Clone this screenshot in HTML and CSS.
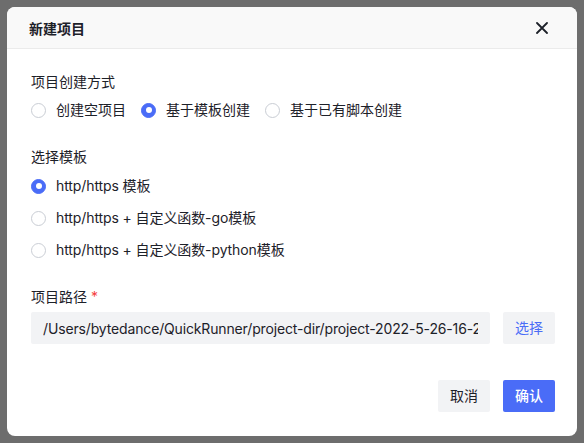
FILE: index.html
```html
<!DOCTYPE html>
<html lang="zh">
<head>
<meta charset="utf-8">
<link rel="stylesheet" href="styles.css">
</head>
<body>
<div class="modal">
  <div class="modal-header">
    <div class="modal-title">新建项目</div>
    <svg class="close" width="12" height="12" viewBox="0 0 12 12"><path d="M1 1L11 11M11 1L1 11" stroke="#1d2129" stroke-width="1.8" stroke-linecap="round"/></svg>
  </div>
  <div class="modal-body">
    <div class="label">项目创建方式</div>
    <div class="radio-row">
      <div class="radio"><span class="dot"></span><span>创建空项目</span></div>
      <div class="radio"><span class="dot checked"></span><span>基于模板创建</span></div>
      <div class="radio"><span class="dot"></span><span>基于已有脚本创建</span></div>
    </div>
    <div class="label section">选择模板</div>
    <div class="radio-col">
      <div class="radio"><span class="dot checked"></span><span>http/https 模板</span></div>
      <div class="radio"><span class="dot"></span><span>http/https + 自定义函数-go模板</span></div>
      <div class="radio"><span class="dot"></span><span>http/https + 自定义函数-python模板</span></div>
    </div>
    <div class="label section">项目路径 <span class="req">*</span></div>
    <div class="path-row">
      <div class="path-input"><div class="path-text">/Users/bytedance/QuickRunner/project-dir/project-2022-5-26-16-23-41</div></div>
      <div class="btn btn-light">选择</div>
    </div>
    <div class="footer">
      <div class="btn btn-gray">取消</div>
      <div class="btn btn-primary">确认</div>
    </div>
  </div>
</div>
</body>
</html>
```
FILE: styles.css
```css
* { box-sizing: border-box; }
html, body { margin: 0; height: 100%; }
body {
  background: #6d6d6d;
  padding: 7px 7px 7px 7px;
  font-family: Inter, "Noto Sans CJK SC", sans-serif;
  font-size: 14px;
  color: #1d2129;
}
.modal {
  width: 570px;
  height: 429px;
  background: #fff;
  border-radius: 8px;
  overflow: hidden;
}
.modal-header {
  height: 42px;
  background: #f9f9f9;
  border-bottom: 1px solid #ebebeb;
  display: flex;
  align-items: center;
  justify-content: space-between;
  padding: 0 29px 0 22px;
}
.modal-title {
  font-weight: 600;
  font-size: 14px;
  color: #1d2129;
}
.close { display: block; }
.modal-body {
  padding: 22px 22px 24px 24px;
}
.label {
  line-height: 22px;
  height: 22px;
  color: #1d2129;
}
.label.section { margin-top: 25px; }
.req { color: #f53f3f; }
.radio-row {
  display: flex;
  gap: 15px;
  margin-top: 6px;
}
.radio-col {
  display: flex;
  flex-direction: column;
  gap: 10px;
  margin-top: 7px;
  letter-spacing: -0.1px;
}
.radio {
  display: flex;
  align-items: center;
  gap: 10px;
  height: 22px;
  line-height: 22px;
}
.dot {
  width: 15px;
  height: 15px;
  border-radius: 50%;
  border: 1px solid #c9cdd4;
  background: #fff;
  position: relative;
  flex: none;
}
.dot.checked {
  border-color: #4a6cf7;
  background: #4a6cf7;
}
.dot.checked::after {
  content: "";
  position: absolute;
  left: 50%;
  top: 50%;
  width: 6px;
  height: 6px;
  margin: -3px 0 0 -3px;
  border-radius: 50%;
  background: #fff;
}
.path-row {
  display: flex;
  gap: 13px;
  margin-top: 4px;
}
.path-input {
  width: 459px;
  height: 32px;
  background: #f2f3f5;
  border-radius: 2px;
  padding: 0 12px;
  display: flex;
  align-items: center;
  overflow: hidden;
}
.path-text {
  white-space: nowrap;
  overflow: hidden;
  width: 100%;
  color: #1d2129;
  letter-spacing: -0.15px;
}
.btn {
  height: 32px;
  line-height: 32px;
  border-radius: 2px;
  text-align: center;
  width: 52px;
  flex: none;
}
.btn-light { background: #f2f3f5; color: #4a6cf7; }
.btn-gray { background: #f2f3f5; color: #1d2129; }
.btn-primary { background: #4a6cf7; color: #fff; font-weight: 500; }
.footer {
  display: flex;
  justify-content: flex-end;
  gap: 13px;
  margin-top: 36px;
}
```
